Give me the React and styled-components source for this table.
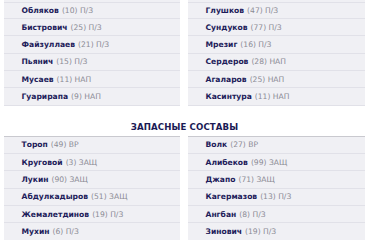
import React from "react";
import styled, { createGlobalStyle } from "styled-components";

const Global = createGlobalStyle`
  html, body { margin: 0; padding: 0; background: #ffffff; }
  body { font-family: "DejaVu Sans", "Noto Sans", sans-serif; overflow: hidden; }
`;

const Page = styled.div`
  width: 375px;
  box-sizing: border-box;
  padding: 0 10px 0 4px;
`;

const Grid = styled.div`
  display: grid;
  grid-template-columns: 176px 177px;
  column-gap: 8px;
`;

const List = styled.ul`
  list-style: none;
  margin: 0;
  padding: ${(p) => (p.$continued ? "1.7px 0 0" : "0")};
  background: #f0f0f4;
  border-top: ${(p) => (p.$bordered ? "1.5px solid #c9c9cf" : "none")};

  & > li:first-child {
    border-top: ${(p) => (p.$continued ? "1px solid #e1e1e8" : "none")};
  }
`;

const Row = styled.li`
  display: flex;
  align-items: center;
  box-sizing: border-box;
  height: 17.33px;
  padding-left: 17.5px;
  background: #f0f0f4;
  border-bottom: 1px solid #e1e1e8;
  font-size: 7.6px;
  white-space: nowrap;
`;

const Name = styled.span`
  font-weight: 700;
  color: #1e1c5a;
`;

const Info = styled.span`
  color: #8b8b95;
  margin-left: 3px;
`;

const Heading = styled.h2`
  margin: 15px 0 3px;
  line-height: 12px;
  font-size: 8.6px;
  font-weight: 700;
  text-align: center;
  color: #1b1a55;
  letter-spacing: 0.1px;
`;

const main = [
  [
    ["Обляков", "(10) П/З"],
    ["Бистрович", "(25) П/З"],
    ["Файзуллаев", "(21) П/З"],
    ["Пьянич", "(15) П/З"],
    ["Мусаев", "(11) НАП"],
    ["Гуарирапа", "(9) НАП"],
  ],
  [
    ["Глушков", "(47) П/З"],
    ["Сундуков", "(77) П/З"],
    ["Мрезиг", "(16) П/З"],
    ["Сердеров", "(28) НАП"],
    ["Агаларов", "(25) НАП"],
    ["Касинтура", "(11) НАП"],
  ],
];

const subs = [
  [
    ["Тороп", "(49) ВР"],
    ["Круговой", "(3) ЗАЩ"],
    ["Лукин", "(90) ЗАЩ"],
    ["Абдулкадыров", "(51) ЗАЩ"],
    ["Жемалетдинов", "(19) П/З"],
    ["Мухин", "(6) П/З"],
  ],
  [
    ["Волк", "(27) ВР"],
    ["Алибеков", "(99) ЗАЩ"],
    ["Джапо", "(71) ЗАЩ"],
    ["Кагермазов", "(13) П/З"],
    ["Ангбан", "(8) П/З"],
    ["Зинович", "(19) П/З"],
  ],
];

const Players = ({ items, bordered, continued }) => (
  <List $bordered={bordered} $continued={continued}>
    {items.map(([n, i]) => (
      <Row key={n}>
        <Name>{n}</Name>
        <Info>{i}</Info>
      </Row>
    ))}
  </List>
);

export default function App() {
  return (
    <>
      <Global />
      <Page>
        <Grid>
          <Players items={main[0]} continued />
          <Players items={main[1]} continued />
        </Grid>
        <Heading>ЗАПАСНЫЕ СОСТАВЫ</Heading>
        <Grid>
          <Players items={subs[0]} bordered />
          <Players items={subs[1]} bordered />
        </Grid>
      </Page>
    </>
  );
}
